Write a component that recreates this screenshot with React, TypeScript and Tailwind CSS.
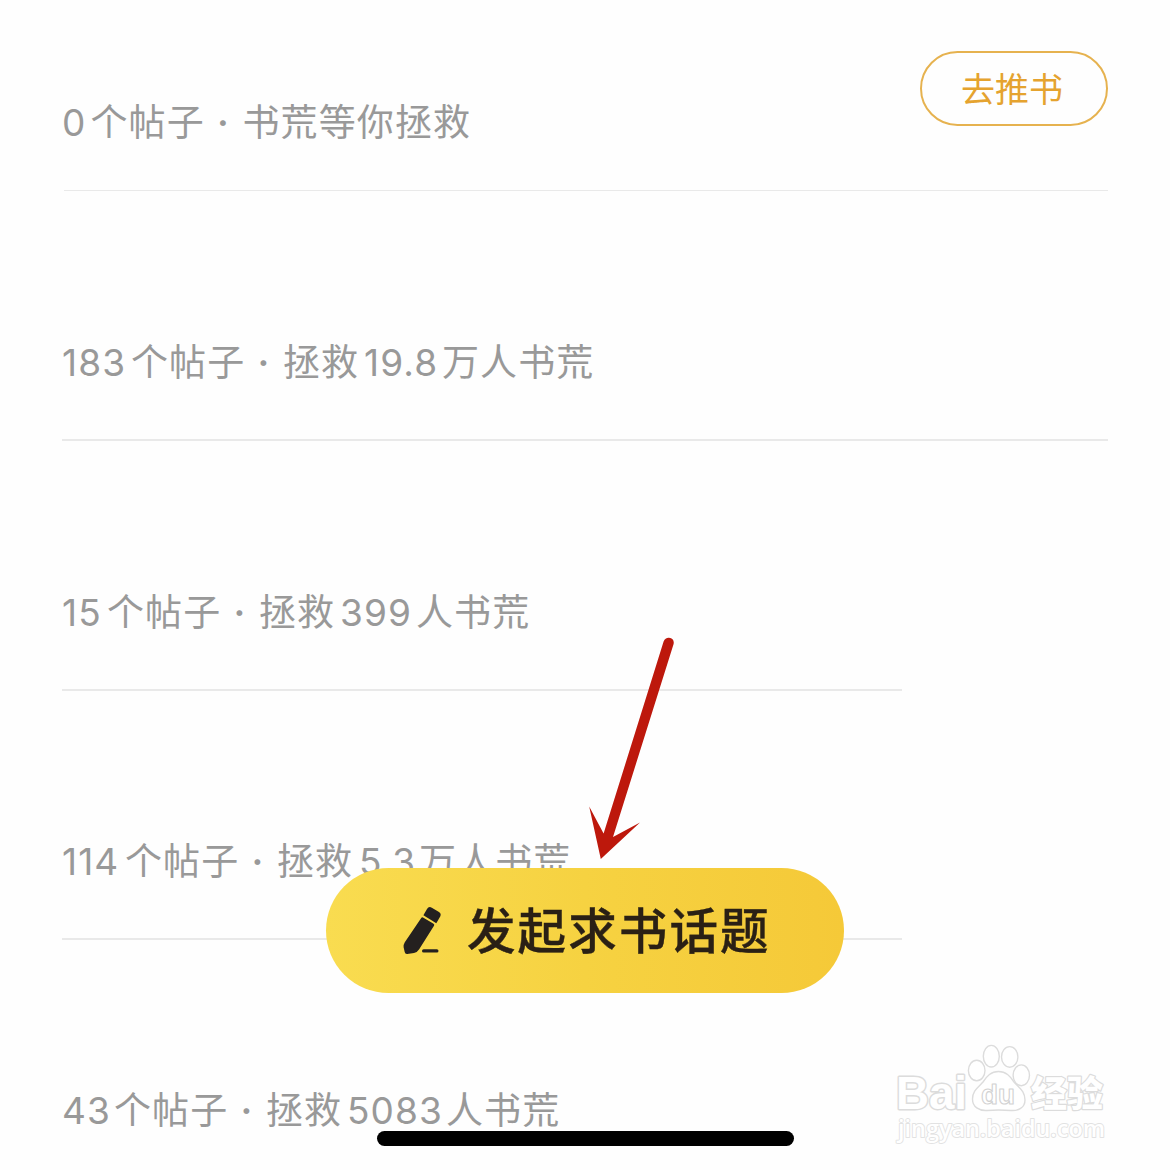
type Segment = { text: string; className: string };

type Topic = {
  id: number;
  segments: Segment[];
  lineClass: string;
  gapClass: string;
  hasAction?: boolean;
};

const topics: Topic[] = [
  {
    id: 1,
    segments: [
      { text: "0", className: "w-[28.5px]" },
      { text: "个帖子", className: "w-[114px]" },
      { text: "·", className: "w-[38px] text-center font-semibold" },
      { text: "书荒等你拯救", className: "" },
    ],
    lineClass: "ml-0.5 w-[1044px] h-px",
    gapClass: "h-[45px] pt-[43px]",
    hasAction: true,
  },
  {
    id: 2,
    segments: [
      { text: "183", className: "w-[69px]" },
      { text: "个帖子", className: "w-[114px]" },
      { text: "·", className: "w-[38px] text-center font-semibold" },
      { text: "拯救", className: "w-[81px]" },
      { text: "19.8", className: "w-[78px]" },
      { text: "万人书荒", className: "" },
    ],
    lineClass: "w-[1046px] h-0.5",
    gapClass: "h-[54px] pt-[52px]",
  },
  {
    id: 3,
    segments: [
      { text: "15", className: "w-[45px]" },
      { text: "个帖子", className: "w-[114px]" },
      { text: "·", className: "w-[38px] text-center font-semibold" },
      { text: "拯救", className: "w-[81px]" },
      { text: "399", className: "w-[76px]" },
      { text: "人书荒", className: "" },
    ],
    lineClass: "w-[840px] h-0.5",
    gapClass: "h-[54px] pt-[52px]",
  },
  {
    id: 4,
    segments: [
      { text: "114", className: "w-[63px]" },
      { text: "个帖子", className: "w-[114px]" },
      { text: "·", className: "w-[38px] text-center font-semibold" },
      { text: "拯救", className: "w-[82px]" },
      { text: "5.3", className: "w-[60px]" },
      { text: "万人书荒", className: "" },
    ],
    lineClass: "w-[840px] h-0.5",
    gapClass: "h-[55px] pt-[52px]",
  },
  {
    id: 5,
    segments: [
      { text: "43", className: "w-[52px]" },
      { text: "个帖子", className: "w-[114px]" },
      { text: "·", className: "w-[38px] text-center font-semibold" },
      { text: "拯救", className: "w-[81px]" },
      { text: "5083", className: "w-[99px]" },
      { text: "人书荒", className: "" },
    ],
    lineClass: "hidden",
    gapClass: "h-[55px]",
  },
];

function TopicRow({ topic }: { topic: Topic }) {
  return (
    <li className="flex h-[249.7px] shrink-0 flex-col justify-end">
      <div className="flex items-end justify-between">
        <p className="flex h-12 items-center whitespace-nowrap text-[37px] leading-[48px] tracking-[1.1px] text-[#999]">
          {topic.segments.map((segment, i) => (
            <span key={i} className={`block shrink-0 ${segment.className}`}>
              {segment.text}
            </span>
          ))}
        </p>
        {topic.hasAction && (
          <button
            type="button"
            className="mb-[21px] flex h-[75px] w-[188px] items-center justify-center rounded-full border-2 border-[#e6b24f] pr-1 pt-0.5 text-[34px] text-[#e5a32f]"
          >
            去推书
          </button>
        )}
      </div>
      <div className={`shrink-0 ${topic.gapClass}`}>
        <div className={`bg-[#e9e9e9] ${topic.lineClass}`} />
      </div>
    </li>
  );
}

function PencilIcon() {
  return (
    <svg width="40" height="50" viewBox="0 0 40 50" fill="#24201f" aria-hidden="true">
      <path d="M25 2.9Q26.8 0 29.8 1.7L37 6Q39.6 7.8 38.2 10.5L34.3 17.2 21.4 9.2Z" />
      <path d="M19.4 11.8Q20 10.9 21 11.5L31.6 17.8Q32.8 18.6 32 19.8L17.2 43.2Q15.2 46.4 12 47L5.3 48Q3.1 48.3 2.7 46L1.6 41.3Q1.2 38.8 2.8 36.2Z" />
      <rect x="20" y="43.2" width="16.5" height="3.4" rx="1.7" />
    </svg>
  );
}

function Arrow() {
  return (
    <svg
      className="absolute left-[580px] top-[630px]"
      width="100"
      height="235"
      viewBox="0 0 100 235"
      aria-hidden="true"
    >
      <path
        d="M83.6 11.5Q85.3 7.6 89 7.8 94.6 8.7 93.6 14L33 207 60 192.5 20.8 229 9.2 176.5 23.6 203.5Z"
        fill="#bd180c"
      />
    </svg>
  );
}

function Watermark() {
  return (
    <svg
      className="absolute left-[890px] top-[1036px]"
      width="225"
      height="115"
      viewBox="0 0 225 115"
      fill="#fff"
      stroke="#dcdcdc"
      strokeWidth="1.4"
      strokeLinejoin="round"
      aria-label="Baidu"
    >
      <text x="6" y="73" fontSize="46" fontWeight="700" textLength="71" lengthAdjust="spacingAndGlyphs" fontFamily="Liberation Sans, sans-serif" strokeWidth="3" paintOrder="stroke">
        Bai
      </text>
      <ellipse cx="86.7" cy="34.5" rx="8.3" ry="10.3" />
      <ellipse cx="101.3" cy="20.2" rx="8" ry="10.8" />
      <ellipse cx="119.7" cy="20.9" rx="8.2" ry="10.3" />
      <ellipse cx="131.3" cy="39.3" rx="8.2" ry="10.4" />
      <path d="M108.5 35.5C116 35.5 120 40 124 46C129 52 135 55 135 64C135 72 128 75 121 74.5C114 74 103 74 97 74.5C89 75 82.5 71 82.5 63C82.5 54 89 51 93 46C97 40 101 35.5 108.5 35.5Z" />
      <text x="91" y="68" fontSize="28" fontWeight="700" textLength="34" lengthAdjust="spacingAndGlyphs" fontFamily="Liberation Sans, sans-serif" stroke="#d2d2d2" strokeWidth="1.1">
        du
      </text>
      <text x="141" y="70.5" fontSize="36" fontWeight="900" fontFamily="Noto Sans CJK SC, sans-serif" strokeWidth="2.4" paintOrder="stroke">
        经验
      </text>
      <text x="8" y="101" fontSize="23" fontWeight="600" textLength="207" lengthAdjust="spacingAndGlyphs" fontFamily="Open Sans, sans-serif" stroke="#e2e2e2" strokeWidth="1.8" paintOrder="stroke">
        jingyan.baidu.com
      </text>
    </svg>
  );
}

export default function App() {
  return (
    <main className="relative h-[1170px] w-[1170px] overflow-hidden bg-[#fefefe] font-['Inter','Noto_Sans_CJK_SC',sans-serif]">
      <ul className="-mt-[58px] flex flex-col pl-[62px] pr-[62px]">
        {topics.map((topic) => (
          <TopicRow key={topic.id} topic={topic} />
        ))}
      </ul>

      <button
        type="button"
        className="absolute left-[326px] top-[868px] flex h-[125px] w-[518px] items-center rounded-full bg-linear-to-r from-[#f9dc50] via-[#f6d241] to-[#f5c938] pl-[76px] text-[#2a2015]"
      >
        <PencilIcon />
        <span className="ml-[25px] mt-[3px] whitespace-nowrap text-[48.5px] font-medium leading-[60px] tracking-[2.1px] [-webkit-text-stroke:0.4px_#2a2015]">
          发起求书话题
        </span>
      </button>

      <Arrow />
      <Watermark />

      <div className="absolute left-[377px] top-[1131px] h-[15px] w-[417px] rounded-full bg-black" />
    </main>
  );
}
